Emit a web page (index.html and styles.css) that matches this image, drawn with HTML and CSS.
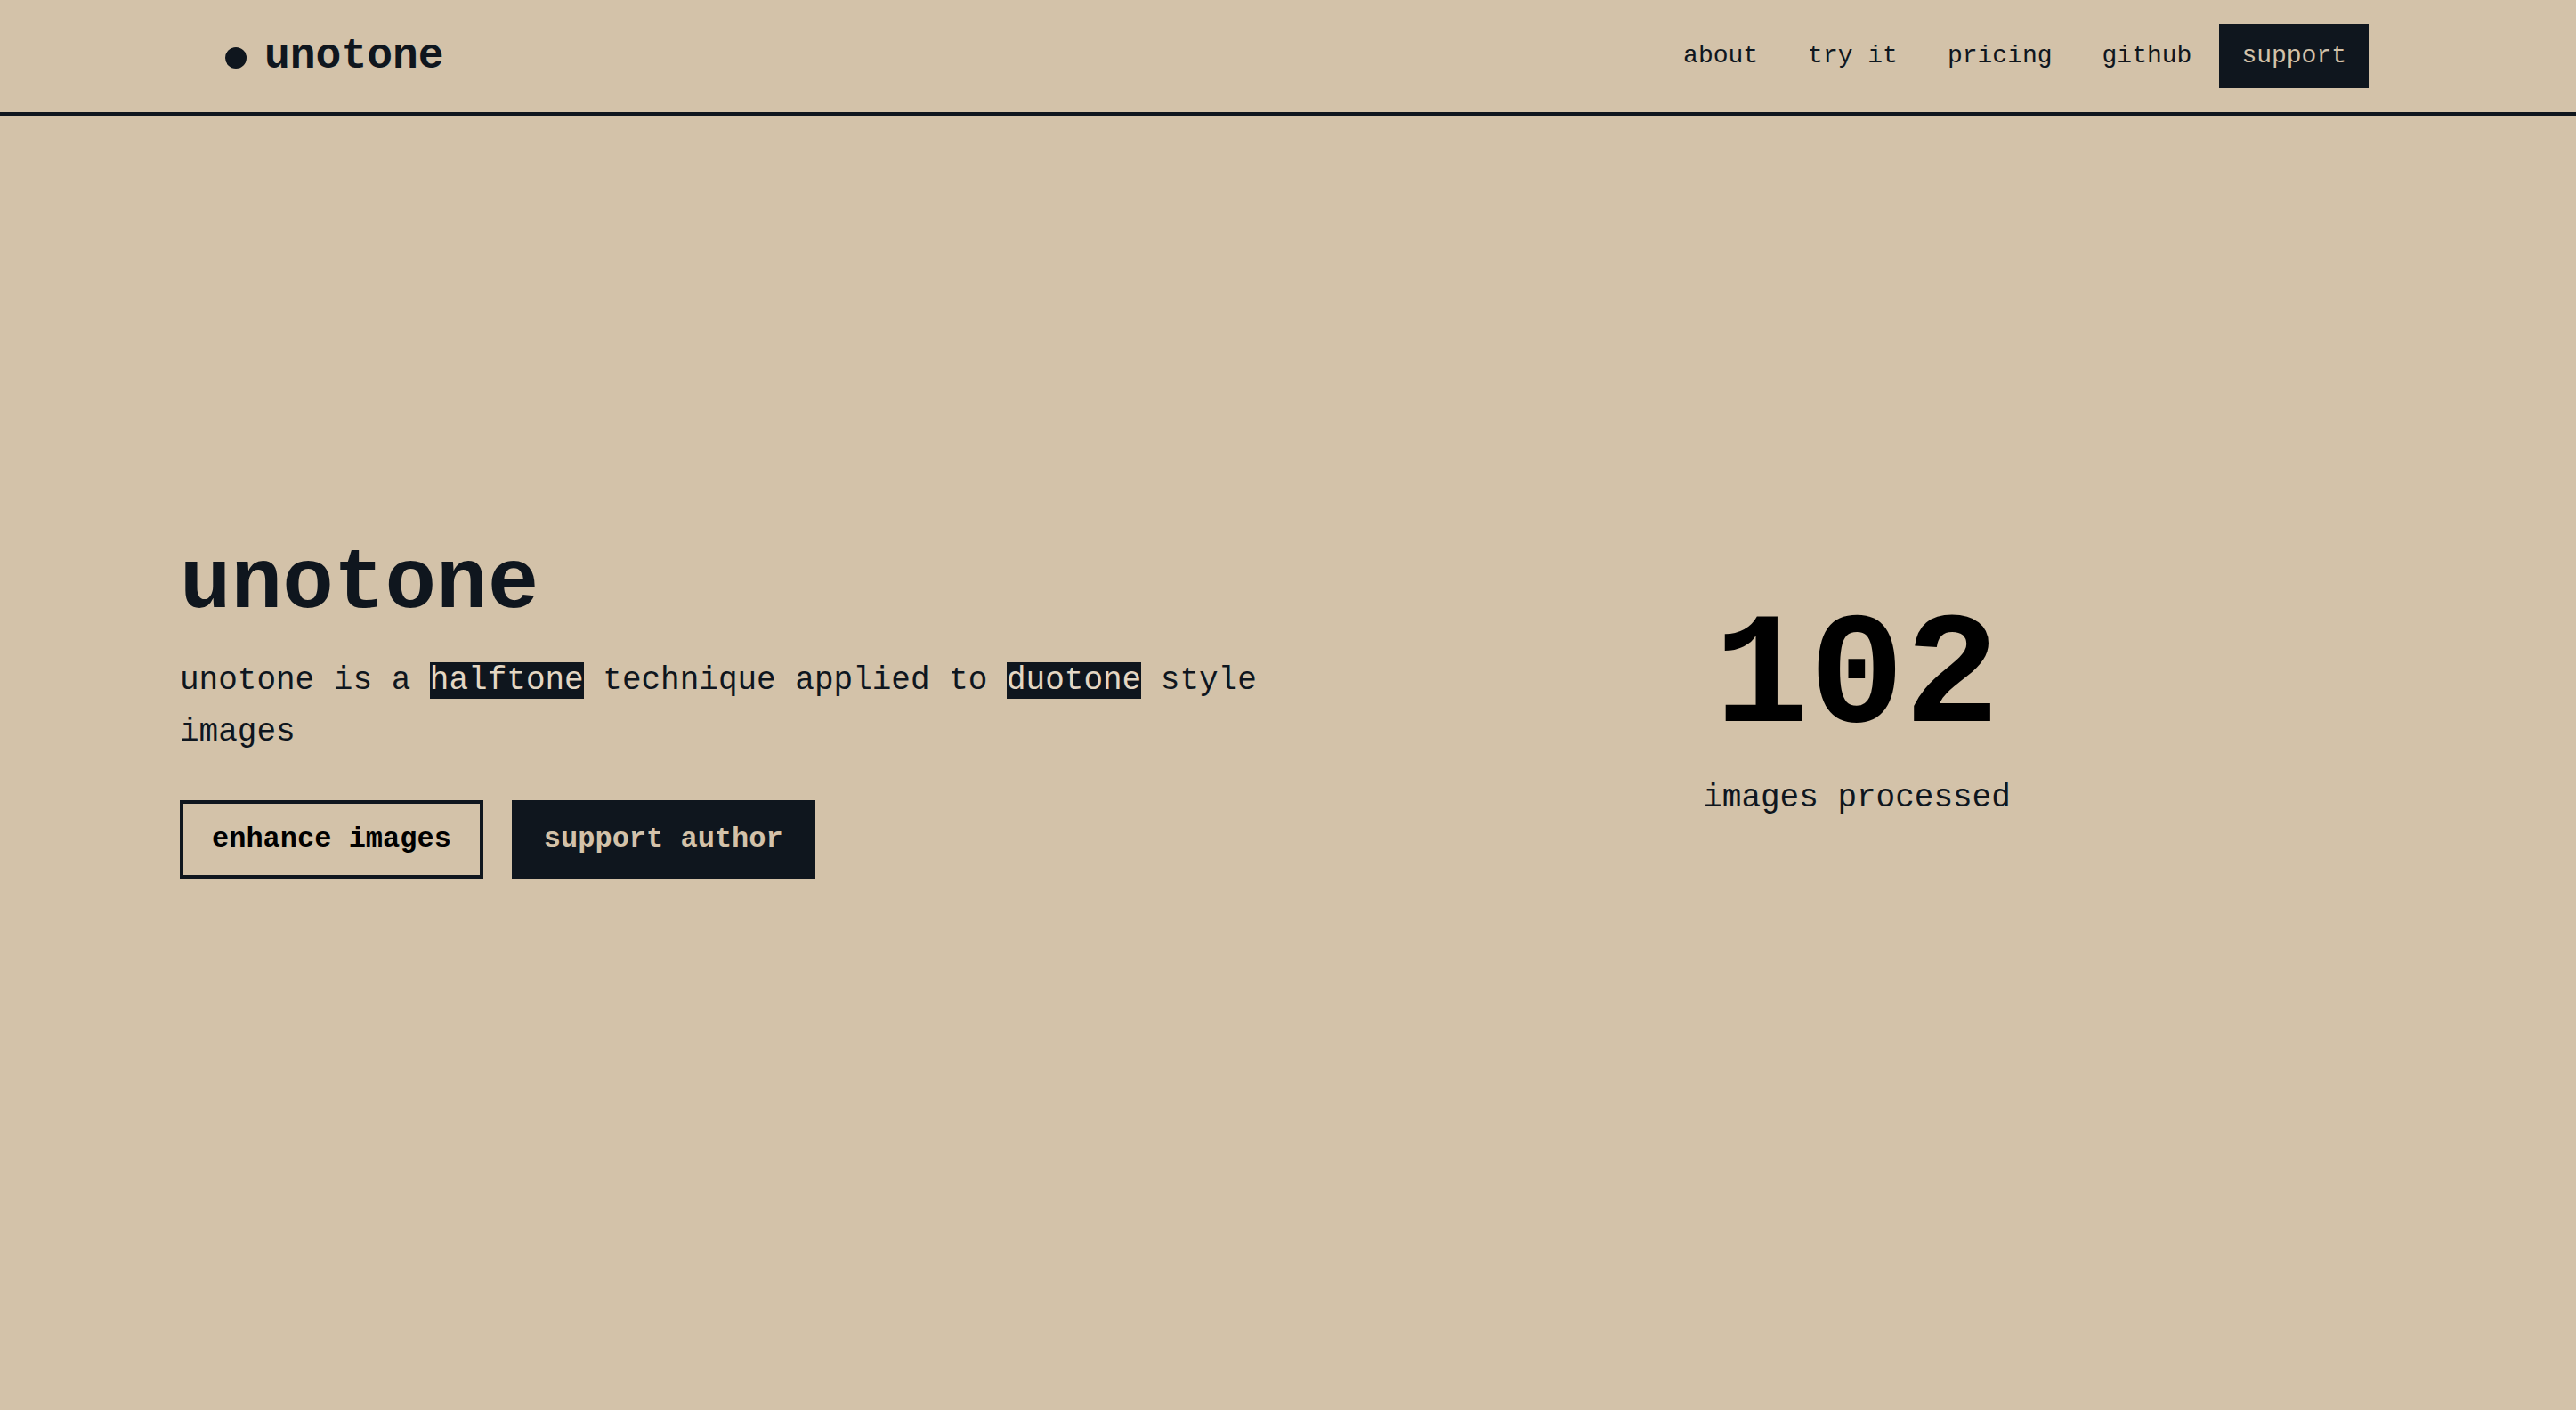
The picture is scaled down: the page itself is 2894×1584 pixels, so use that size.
FILE: index.html
```html
<!DOCTYPE html>
<html lang="en">
<head>
<meta charset="utf-8">
<title>unotone</title>
<link rel="stylesheet" href="styles.css">
</head>
<body>
<header class="site-header">
  <a class="brand" href="#"><span class="brand-dot"></span><span class="brand-name">unotone</span></a>
  <nav class="nav">
    <a class="nav-link" href="#">about</a>
    <a class="nav-link" href="#">try it</a>
    <a class="nav-link" href="#">pricing</a>
    <a class="nav-link" href="#">github</a>
    <a class="nav-link nav-cta" href="#">support</a>
  </nav>
</header>
<main class="hero">
  <section class="hero-copy">
    <h1 class="hero-title">unotone</h1>
    <p class="hero-text">unotone is a <span class="mark">halftone</span> technique applied to <span class="mark">duotone</span> style images</p>
    <div class="hero-actions">
      <a class="btn btn-outline" href="#">enhance images</a>
      <a class="btn btn-solid" href="#">support author</a>
    </div>
  </section>
  <section class="counter">
    <div class="counter-value">102</div>
    <div class="counter-label">images processed</div>
  </section>
</main>
</body>
</html>
```

FILE: styles.css
```css
* { box-sizing: border-box; }
html, body { margin: 0; padding: 0; }
body {
  background: #d3c2a9;
  color: #0f161e;
  font-family: "Liberation Mono", "Courier New", monospace;
}
a { color: inherit; text-decoration: none; }

.site-header {
  height: 130px;
  border-bottom: 4px solid #0f161e;
  display: flex;
  align-items: center;
  justify-content: space-between;
  padding: 0 233px 0 253px;
}
.brand {
  display: flex;
  align-items: center;
  gap: 20px;
}
.brand-dot {
  width: 24px;
  height: 24px;
  border-radius: 50%;
  background: #0f161e;
  margin-top: 4px;
}
.brand-name {
  font-size: 48px;
  font-weight: 700;
  line-height: 1;
}
.nav {
  display: flex;
  align-items: center;
  gap: 6px;
}
.nav-link {
  font-size: 28px;
  line-height: 44px;
  padding: 14px 25px;
}
.nav-cta {
  background: #0f161e;
  color: #d3c2a9;
}

.hero {
  height: 1326px;
  display: grid;
  grid-template-columns: 1fr 1fr;
  align-items: center;
  padding: 0 180px 0 202px;
}
.hero-title {
  margin: 0;
  font-size: 96px;
  font-weight: 700;
  line-height: 1.2;
}
.hero-text {
  margin: 22px 0 0;
  font-size: 36px;
  line-height: 1.6;
}
.mark {
  background: #0f161e;
  color: #e4d7c3;
}
.hero-actions {
  display: flex;
  gap: 32px;
  margin-top: 48px;
}
.btn {
  border: 4px solid #0f161e;
  padding: 16px 32px;
  font-size: 32px;
  line-height: 48px;
  font-weight: 700;
}
.btn-outline { color: #000; }
.btn-solid { background: #0f161e; color: #d3c2a9; }

.counter {
  display: flex;
  flex-direction: column;
  align-items: center;
  gap: 16px;
  padding-top: 14px;
}
.counter-value {
  font-size: 178px;
  line-height: 1;
  font-weight: 700;
  color: #000;
}
.counter-label {
  font-size: 36px;
  line-height: 1.6;
}
```
